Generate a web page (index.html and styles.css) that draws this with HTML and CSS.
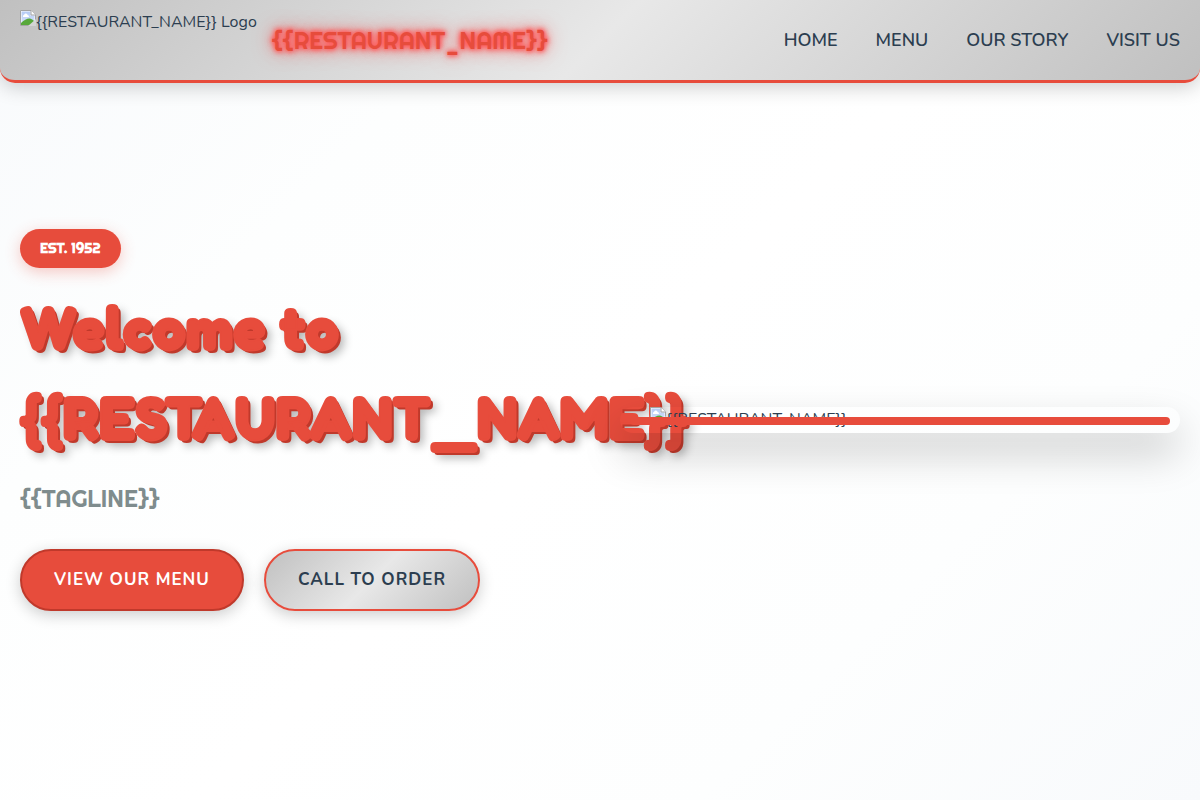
FILE: index.html
```html
<!DOCTYPE html>
<html lang="en">
<head>
<meta charset="utf-8">
<meta name="viewport" content="width=device-width, initial-scale=1">
<title>{{RESTAURANT_NAME}}</title>
<link rel="stylesheet" href="styles.css">
</head>
<body>
<svg class="defs" aria-hidden="true">
  <defs>
    <linearGradient id="sky" x1="0" y1="0" x2="0" y2="1">
      <stop offset="0" stop-color="#b4caf5"/>
      <stop offset="1" stop-color="#d8e4fb"/>
    </linearGradient>
    <symbol id="picture" viewBox="0 0 16 16">
      <path d="M0.5 0.5H11L15.5 5V15.5H0.5Z" fill="#fff" stroke="#a3a3a3"/>
      <path d="M1.500 1.500H10.5V5.5H14.500V14.500H1.500Z" fill="url(#sky)"/>
      <path d="M3 7V6Q3 5 4 5Q4.500 3 6 3.500Q7.500 3.500 7.500 5Q9 5 9 7Z" fill="#fff"/>
      <path d="M1 15V13Q6 8 10 8.500Q12.500 9 14 11V15Z" fill="#58a83a"/>
      <path d="M8 16L16 9V16Z" fill="#d4d4d4"/>
      <path d="M11 0.500V5H15.500" fill="#fff" stroke="#a3a3a3"/>
    </symbol>
  </defs>
</svg>
<header class="header">
  <div class="brand">
    <div class="picture brand-logo"><svg class="picture-icon" aria-hidden="true"><use href="#picture"/></svg><span>{{RESTAURANT_NAME}} Logo</span></div>
    <span class="brand-name">{{RESTAURANT_NAME}}</span>
  </div>
  <nav class="nav">
    <a href="#home">HOME</a>
    <a href="#menu">MENU</a>
    <a href="#story">OUR STORY</a>
    <a href="#visit">VISIT US</a>
  </nav>
</header>
<main class="hero" id="home">
  <section class="intro">
    <span class="badge">EST. 1952</span>
    <h1 class="title">Welcome to {{RESTAURANT_NAME}}</h1>
    <p class="tagline">{{TAGLINE}}</p>
    <div class="actions">
      <a class="button button-primary" href="#menu">VIEW OUR MENU</a>
      <a class="button button-chrome" href="#call">CALL TO ORDER</a>
    </div>
  </section>
  <div class="frame">
    <div class="picture"><svg class="picture-icon" aria-hidden="true"><use href="#picture"/></svg><span>{{RESTAURANT_NAME}}</span></div>
  </div>
</main>
</body>
</html>
```
FILE: styles.css
```css
:root {
  --red: #e74c3c;
  --dark-red: #c0392b;
  --ink: #2c3e50;
  --glow: #ff5a5a;
  --chrome: linear-gradient(135deg, #c0c0c0 0%, #e8e8e8 50%, #c0c0c0 100%);
  --body-font: Nunito, "Open Sans", "Noto Sans", sans-serif;
  --display-font: Righteous, Inter, sans-serif;
}

* { box-sizing: border-box; margin: 0; }

body {
  display: flex;
  flex-direction: column;
  min-height: 100vh;
  background: linear-gradient(135deg, #f8fafc 0%, #fdfefe 25%, #ffffff 50%, #fdfefe 75%, #f8fafc 100%);
  color: var(--ink);
  font: 16px/26px var(--body-font);
}

.defs { position: absolute; width: 0; height: 0; }

.header {
  display: flex;
  align-items: center;
  justify-content: space-between;
  padding: 10px 20px;
  background: var(--chrome);
  border-bottom: 3px solid var(--red);
  border-radius: 0 0 15px 15px;
  box-shadow: 0 4px 20px rgba(0, 0, 0, 0.2);
}

.brand { display: flex; align-items: center; gap: 15px; }

.picture {
  display: flex;
  align-items: flex-start;
  line-height: 24px;
  white-space: nowrap;
}

.picture-icon { width: 16px; height: 16px; flex: none; }

.brand-logo { height: 60px; }

.brand-name {
  color: var(--red);
  font: 400 24px/38px var(--display-font);
  text-shadow: 0 0 5px var(--glow), 0 0 5px var(--glow), 0 0 10px var(--glow), 0 0 20px var(--glow);
}

.nav { display: flex; gap: 38px; }

.nav a {
  color: var(--ink);
  font-size: 18px;
  line-height: 28px;
  font-weight: 600;
  text-decoration: none;
}

.hero {
  flex: 1;
  display: grid;
  grid-template-columns: minmax(0, 1fr) minmax(0, 1fr);
  gap: 40px;
  align-items: center;
  padding: 40px 20px 83px;
}

.badge {
  display: inline-block;
  margin-bottom: 14px;
  padding: 8px 20px;
  border-radius: 25px;
  background: var(--red);
  color: #fff;
  font: 700 14px/23px var(--display-font);
  box-shadow: 0 4px 15px rgba(231, 76, 60, 0.3);
}

.title {
  color: var(--red);
  font: 700 60px/90px Fredoka, Nunito, sans-serif;
  -webkit-text-stroke: 2px var(--red);
  text-shadow: 3px 3px 0 var(--dark-red), 6px 6px 10px rgba(0, 0, 0, 0.3);
}

.tagline {
  margin: 17px 0 32px;
  color: #7f8c8d;
  font: 400 24px/38px var(--display-font);
}

.actions { display: flex; gap: 20px; }

.button {
  padding: 16px 32px;
  border: 2px solid var(--dark-red);
  border-radius: 50px;
  font-size: 17px;
  font-weight: 700;
  letter-spacing: 1px;
  text-decoration: none;
  white-space: nowrap;
  box-shadow: 0 4px 15px rgba(0, 0, 0, 0.2);
}

.button-primary { background: var(--red); color: #fff; }

.button-chrome {
  background: var(--chrome);
  border-color: var(--red);
  color: var(--ink);
}

.frame {
  position: relative;
  padding: 0 30px;
  border-radius: 20px;
  box-shadow: 0 20px 40px rgba(0, 0, 0, 0.22);
}

.frame .picture { height: 26px; }

.frame::after {
  content: "";
  position: absolute;
  inset: 10px 10px auto;
  height: 8px;
  border-radius: 4px;
  background: var(--red);
}
```
